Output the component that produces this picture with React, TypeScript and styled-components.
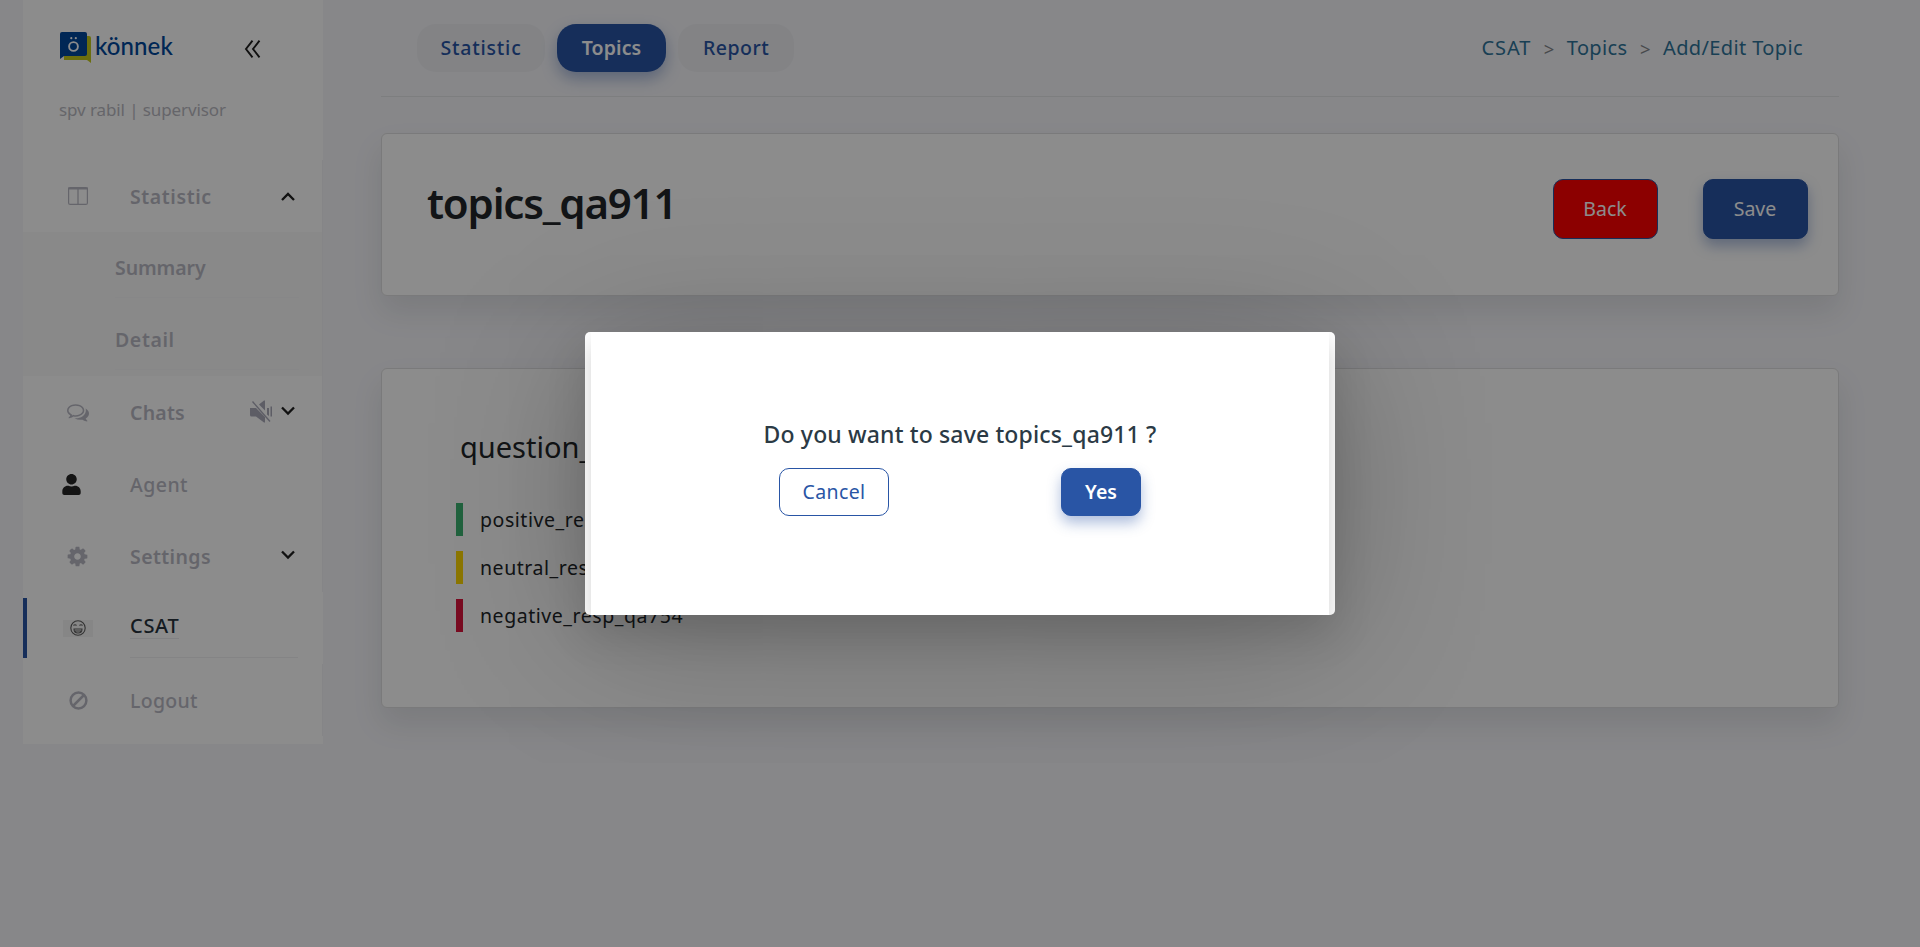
import React from "react";
import styled, { createGlobalStyle } from "styled-components";
import { FaUser } from "react-icons/fa";

const Global = createGlobalStyle`
  * { box-sizing: border-box; }
  body {
    margin: 0;
    background: #f6f6fa;
    font-family: "Noto Sans", "Open Sans", sans-serif;
    font-size: 19.5px;
    color: #212529;
    overflow: hidden;
  }
  button { font: inherit; cursor: pointer; }
`;

const Page = styled.div`
  display: flex;
  height: 947px;
  padding-left: 23px;
`;

const Text = styled.span<{ $ls?: number; $size?: number }>`
  white-space: nowrap;
  letter-spacing: ${(p) => p.$ls ?? 0}px;
  ${(p) => (p.$size ? `font-size: ${p.$size}px;` : "")}
`;

/* ---------- sidebar ---------- */

const Sidebar = styled.aside`
  width: 300px;
  height: 744px;
  background: #fff;
  display: flex;
  flex-direction: column;
`;

const Brand = styled.div`
  height: 94px;
  padding: 32px 62px 0 36px;
  display: flex;
  align-items: flex-start;
  justify-content: space-between;
`;

const Logo = styled.div`
  display: flex;
  align-items: flex-start;
  color: #00479b;
`;

const LogoName = styled.span`
  margin: -2px 0 0 4px;
  font: 500 24px/32px "Lato", sans-serif;
  letter-spacing: 0.1px;
`;

const Collapse = styled.svg`
  margin-top: 8px;
`;

const UserLine = styled.div`
  height: 66px;
  padding-left: 36px;
  line-height: 32px;
  font-size: 17px;
  color: #b9b9c1;
`;

const Item = styled.div<{ $active?: boolean; $strong?: boolean }>`
  height: 72px;
  display: flex;
  align-items: center;
  position: relative;
  color: ${(p) => (p.$active ? "#27323c" : "#b9b9c4")};
  font-weight: ${(p) => (p.$strong ? 600 : 500)};
  border-right: 1px solid ${(p) => (p.$active ? "#fff" : "#f3f3f6")};
`;

const IconCell = styled.div<{ $left: number }>`
  width: 107px;
  padding-left: ${(p) => p.$left}px;
  display: flex;
  align-items: center;
`;

const Tail = styled.div<{ $drop?: boolean }>`
  margin-left: auto;
  padding-right: 27px;
  padding-${(p) => (p.$drop ? "top" : "bottom")}: 2px;
  display: flex;
  align-items: center;
  gap: 8px;
  color: #1f1f1f;
`;

const Submenu = styled.div`
  height: 144px;
  background: #f9f9f9;
  border-right: 1px solid #f3f3f6;
`;

const SubItem = styled.div`
  height: 66px;
  margin: 0 23px 6px 92px;
  display: flex;
  align-items: center;
  padding-top: 5px;
  border-bottom: 1px solid #f6f6f7;
  color: #b9b9c4;
  font-weight: 600;
`;

const ActiveBar = styled.span`
  position: absolute;
  left: 0;
  top: 6px;
  width: 4px;
  height: 60px;
  background: #2955a5;
`;

const ActiveLabel = styled(Text)`
  height: 24px;
  margin-top: -2px;
  line-height: 22px;
  border-bottom: 1px solid #ececee;
`;

const ActiveLine = styled.span`
  position: absolute;
  left: 107px;
  right: 24px;
  top: 65px;
  height: 1px;
  background: #f0f0f2;
`;

const FaceBox = styled.div`
  width: 30px;
  height: 17px;
  background: #f5f5f5;
  display: flex;
  align-items: center;
  justify-content: center;
`;

/* ---------- main ---------- */

const Main = styled.main`
  width: 1458px;
  margin-left: 58px;
`;

const Header = styled.header`
  height: 97px;
  padding: 24px 36px;
  display: flex;
  justify-content: space-between;
  border-bottom: 1px solid #e4e5e8;
`;

const Tabs = styled.nav`
  display: flex;
  gap: 12px;
`;

const Tab = styled.button<{ $w: number; $active?: boolean }>`
  width: ${(p) => p.$w}px;
  height: 48px;
  padding: 0 0 2px;
  border: 0;
  border-radius: 19px;
  font-weight: ${(p) => (p.$active ? 600 : 500)};
  color: ${(p) => (p.$active ? "#fff" : "#2955a5")};
  background: ${(p) => (p.$active ? "#2955a5" : "#eeeff3")};
  box-shadow: ${(p) => (p.$active ? "0 7px 15px rgba(41,85,165,.38)" : "none")};
`;

const Crumbs = styled.div`
  height: 46px;
  display: flex;
  align-items: center;
  gap: 12.5px;
  font-size: 20px;
  color: #2f7499;
`;

const Sep = styled.span`
  padding-top: 2px;
  color: #83868b;
  font-size: 18.5px;
`;

const Card = styled.section<{ $h: number; $mt: number }>`
  height: ${(p) => p.$h}px;
  margin-top: ${(p) => p.$mt}px;
  background: #fff;
  border: 1px solid #dfdfe0;
  border-radius: 6px;
  box-shadow: 0 16px 30px rgba(20, 30, 40, 0.1);
`;

const TitleCard = styled(Card)`
  display: flex;
  justify-content: space-between;
  padding: 45px 30px 0 45px;
`;

const Title = styled.h1`
  margin: -10px 0 0;
  font-size: 42px;
  line-height: 68px;
  font-weight: 600;
`;

const Actions = styled.div`
  display: flex;
  gap: 45px;
`;

const Action = styled.button<{ $danger?: boolean }>`
  width: 105px;
  height: 60px;
  padding: 0 1px 2px 0;
  color: #fff;
  border: 1px solid #2955a5;
  border-radius: 10px;
  background: ${(p) => (p.$danger ? "#ff0000" : "#2955a5")};
  box-shadow: ${(p) => (p.$danger ? "none" : "0 7px 14px rgba(41,85,165,.38)")};
`;

const QuestionCard = styled(Card)`
  padding: 57px 0 0 74px;
`;

const Question = styled.h2`
  margin: 0 0 35px 4px;
  font-weight: 400;
  font-size: 29px;
  line-height: 42px;
`;

const Answer = styled.div<{ $color: string }>`
  height: 33px;
  margin-bottom: 15px;
  padding-left: 17px;
  border-left: 7px solid ${(p) => p.$color};
  display: flex;
  align-items: center;
`;

/* ---------- dialog ---------- */

const Overlay = styled.div`
  position: absolute;
  inset: 0;
  height: 947px;
  background: rgba(0, 0, 0, 0.45);
  display: flex;
  justify-content: center;
  align-items: center;
`;

const Dialog = styled.div`
  width: 750px;
  height: 283px;
  padding: 0 6px;
  border-radius: 5px;
  background: #fff;
  overflow: hidden;
`;

const DialogShadow = styled.div`
  border-radius: 5px;
  box-shadow: 0 20px 40px rgba(0, 0, 0, 0.12), 0 20px 150px rgba(0, 0, 0, 0.25);
`;

const DialogBody = styled.div`
  height: 100%;
  padding-top: 88px;
  background: #fff;
  box-shadow: 0 12px 23px rgba(0, 0, 0, 0.18);
  text-align: center;
  color: #2b3a45;
`;

const Prompt = styled.div`
  height: 48px;
  line-height: 28px;
  font-weight: 500;
  font-size: 23px;
`;

const Choices = styled.div`
  display: flex;
  justify-content: space-between;
  padding: 0 188px;
`;

const Choice = styled.button<{ $w: number; $primary?: boolean }>`
  width: ${(p) => p.$w}px;
  height: 48px;
  padding: 0 0 1px;
  border: 1px solid #2955a5;
  border-radius: 10px;
  font-weight: ${(p) => (p.$primary ? 600 : 400)};
  color: ${(p) => (p.$primary ? "#fff" : "#2955a5")};
  background: ${(p) => (p.$primary ? "#2955a5" : "#fff")};
  box-shadow: ${(p) => (p.$primary ? "0 7px 14px rgba(41,85,165,.38)" : "none")};
`;

const Chevron = ({ up }: { up?: boolean }) => (
  <svg width="14" height="10" viewBox="0 0 14 10" fill="none" stroke="currentColor" strokeWidth="2.3">
    <path d={up ? "M1 8 7 2l6 6" : "M1 1.5l6 6 6-6"} />
  </svg>
);

export default function App() {
  return (
    <>
      <Global />
      <Page>
        <Sidebar>
          <Brand>
            <Logo>
              <svg width="32" height="32" viewBox="0 0 32 32">
                <path d="M5 4h25a2 2 0 0 1 2 2v25l-4-3H5z" fill="#c4c91a" />
                <path d="M3 0h23a2 2 0 0 1 2 2v20a2 2 0 0 1-2 2H5l-4 3V2a2 2 0 0 1 2-2z" fill="#00479b" />
                <circle cx="14.5" cy="14.5" r="4.4" fill="none" stroke="#fff" strokeWidth="1.9" />
                <circle cx="12.3" cy="6.2" r="1.1" fill="#fff" />
                <circle cx="16.8" cy="6.2" r="1.1" fill="#fff" />
              </svg>
              <LogoName>könnek</LogoName>
            </Logo>
            <Collapse width="17" height="18" viewBox="0 0 17 18" fill="none" stroke="#1f1f1f" strokeWidth="1.9">
              <path d="M8.5.7 2 9l6.500 8.300M15.500.7 9 9l6.500 8.300" />
            </Collapse>
          </Brand>
          <UserLine>
            <Text $ls={-0.1}>spv rabil | supervisor</Text>
          </UserLine>
          <Item $strong>
            <IconCell $left={45}>
              <svg width="20" height="18" viewBox="0 0 20 18" fill="none" stroke="currentColor">
                <rect x=".6" y=".6" width="18.800" height="16.800" rx="1.500" strokeWidth="1.200" />
                <path d="M0 1.500h20" strokeWidth="2" />
                <path d="M10 2v15" strokeWidth="1.300" />
              </svg>
            </IconCell>
            <Text $ls={0.6}>Statistic</Text>
            <Tail $drop><Chevron up /></Tail>
          </Item>
          <Submenu>
            <SubItem><Text $ls={-0.1}>Summary</Text></SubItem>
            <SubItem><Text $ls={0.6}>Detail</Text></SubItem>
          </Submenu>
          <Item $strong>
            <IconCell $left={44}>
              <svg width="22" height="22" viewBox="0 0 1792 1792" fill="currentColor">
                <path d="M704 384q-153 0-286 52t-211.500 141-78.500 191q0 82 53 158t149 132l97 56-35 84q34-20 62-39l44-31 53 10q78 14 153 14 153 0 286-52t211.500-141 78.500-191-78.500-191-211.500-141-286-52zm0-128q191 0 353.500 68.500t256.500 186.500 94 257-94 257-256.500 186.500-353.500 68.500q-86 0-176-16-124 88-278 128-36 9-86 16h-3q-11 0-20.500-8t-11.500-21q-1-3-1-6.500t.5-6.500 2-6l2.500-5 3.500-5.500 4-5 4.500-5 4-4.500q5-6 23-25t26-29.500 22.500-29 25-38.500 20.500-44q-124-72-195-177t-71-224q0-139 94-257t256.500-186.500 353.500-68.500zm822 1169q10 24 20.500 44t25 38.500 22.500 29 26 29.500 23 25q1 1 4 4.500t4.500 5 4 5 3.500 5.500l2.500 5 2 6 .5 6.500-1 6.500q-3 14-13 22t-22 7q-50-7-86-16-154-40-278-128-90 16-176 16-271 0-472-132 58 4 88 4 161 0 309-45t264-129q125-92 192-212t67-254q0-77-23-152 129 71 204 178t75 230q0 120-71 224.500t-195 176.500z" />
              </svg>
            </IconCell>
            <Text $ls={0.2}>Chats</Text>
            <Tail>
              <svg width="23" height="23" viewBox="0 0 23 23" fill="#a9a9b9">
                <path d="M0 8h6l9 9v5.500h-1L6 16.500H1.500Q0 16.500 0 15z" />
                <path d="M9 4.500 14 .5h1V10.500zM17 8h2v8l-2-1.500zM20.500 6.500H22v10h-1.500z" />
                <path d="M2.500 1.500 20 21.500" stroke="#a9a9b9" strokeWidth="1.300" />
              </svg>
              <Chevron />
            </Tail>
          </Item>
          <Item>
            <IconCell $left={38}><FaUser size={21} color="#262626" /></IconCell>
            <Text $ls={0.45}>Agent</Text>
          </Item>
          <Item $strong>
            <IconCell $left={43}>
              <svg width="23" height="23" viewBox="0 0 1792 1792" fill="currentColor">
                <path d="M1152 896q0-106-75-181t-181-75-181 75-75 181 75 181 181 75 181-75 75-181zm512-109v222q0 12-8 23t-20 13l-185 28q-19 54-39 91 35 50 107 138 10 12 10 25t-9 23q-27 37-99 108t-94 71q-12 0-26-9l-138-108q-44 23-91 38-16 136-29 186-7 28-36 28h-222q-14 0-24.500-8.500t-11.500-21.500l-28-184q-49-16-90-37l-141 107q-10 9-25 9-14 0-25-11-126-114-165-168-7-10-7-23 0-12 8-23 15-21 51-66.500t54-70.500q-27-50-41-99l-183-27q-13-2-21-12.500t-8-23.500v-222q0-12 8-23t19-13l186-28q14-46 39-92-40-57-107-138-10-12-10-24 0-10 9-23 26-36 98.500-107.500t94.500-71.500q13 0 26 10l138 107q44-23 91-38 16-136 29-186 7-28 36-28h222q14 0 24.500 8.500t11.500 21.500l28 184q49 16 90 37l142-107q9-9 24-9 13 0 25 10 129 119 165 170 7 8 7 22 0 12-8 23-15 21-51 66.500t-54 70.500q26 50 41 98l183 28q13 2 21 12.500t8 23.500z" />
              </svg>
            </IconCell>
            <Text $ls={0.4}>Settings</Text>
            <Tail><Chevron /></Tail>
          </Item>
          <Item $active>
            <ActiveBar />
            <IconCell $left={40}>
              <FaceBox>
                <svg width="16" height="16" viewBox="0 0 16 16" fill="none" stroke="#5c5c5c" strokeWidth="1.1">
                  <circle cx="8" cy="8" r="7.200" />
                  <path d="M3.500 5.500q1.500-1.500 3 0M9.500 5.500q1.500-1.500 3 0M4 9h8q0 4-4 4t-4-4zM5 11h6" />
                </svg>
              </FaceBox>
            </IconCell>
            <ActiveLabel $size={20} $ls={0.7}>CSAT</ActiveLabel>
            <ActiveLine />
          </Item>
          <Item>
            <IconCell $left={46}>
              <svg width="19" height="19" viewBox="0 0 19 19" fill="none" stroke="currentColor" strokeWidth="2.500">
                <circle cx="9.500" cy="9.500" r="7.900" />
                <path d="M4 15 15 4" />
              </svg>
            </IconCell>
            <Text $ls={0.3}>Logout</Text>
          </Item>
        </Sidebar>
        <Main>
          <Header>
            <Tabs>
              <Tab $w={128}><Text $ls={0.8}>Statistic</Text></Tab>
              <Tab $w={109} $active><Text $ls={0.1}>Topics</Text></Tab>
              <Tab $w={116}><Text $ls={0.5}>Report</Text></Tab>
            </Tabs>
            <Crumbs>
              <Text $ls={0.9}>CSAT</Text><Sep>&gt;</Sep><Text $ls={0.35}>Topics</Text><Sep>&gt;</Sep><Text $ls={0.38}>Add/Edit Topic</Text>
            </Crumbs>
          </Header>
          <TitleCard $h={163} $mt={36}>
            <Title><Text $ls={-1.2}>topics_qa911</Text></Title>
            <Actions>
              <Action $danger><Text>Back</Text></Action>
              <Action><Text>Save</Text></Action>
            </Actions>
          </TitleCard>
          <QuestionCard $h={340} $mt={72}>
            <Question><Text>question_qa754</Text></Question>
            <Answer $color="#3cb371"><Text $ls={0.55}>positive_resp_qa754</Text></Answer>
            <Answer $color="#ffd700"><Text $ls={0.55}>neutral_resp_qa754</Text></Answer>
            <Answer $color="#dc143c"><Text $ls={0.55}>negative_resp_qa754</Text></Answer>
          </QuestionCard>
        </Main>
      </Page>
      <Overlay>
        <DialogShadow>
          <Dialog>
            <DialogBody>
              <Prompt><Text $ls={0.15}>Do you want to save topics_qa911 ?</Text></Prompt>
              <Choices>
                <Choice $w={110}><Text $ls={0.4}>Cancel</Text></Choice>
                <Choice $w={80} $primary><Text>Yes</Text></Choice>
              </Choices>
            </DialogBody>
          </Dialog>
        </DialogShadow>
      </Overlay>
    </>
  );
}
